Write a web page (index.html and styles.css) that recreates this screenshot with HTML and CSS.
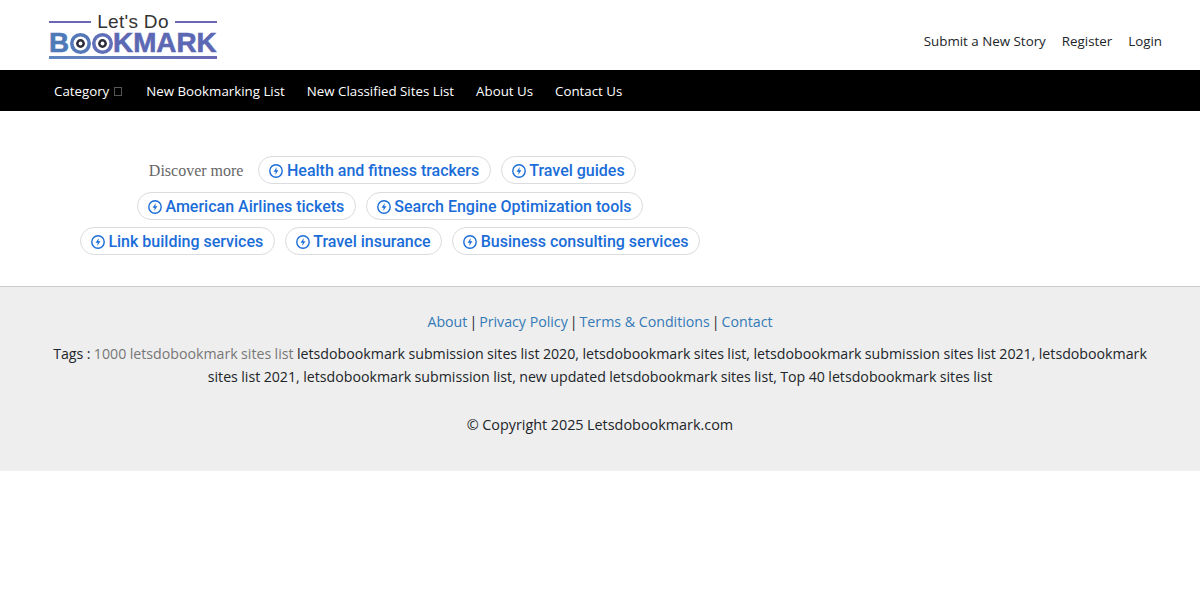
FILE: index.html
```html
<!DOCTYPE html>
<html lang="en">
<head>
<meta charset="utf-8">
<title>Let's Do Bookmark</title>
<link rel="stylesheet" href="styles.css">
</head>
<body>
<header class="top">
  <a class="logo" href="#">
    <span class="logo-line1"><i class="rule"></i><span class="lets">Let's Do</span><i class="rule"></i></span>
    <span class="logo-line2"><span class="logo-b">B</span><svg class="eye" viewBox="0 0 20 20"><circle cx="10" cy="10" r="10" fill="#5578b8"/><circle cx="10" cy="10" r="6.6" fill="#fff"/><circle cx="10" cy="10" r="4.2" fill="#2b2b3a"/><circle cx="10" cy="10" r="1.8" fill="#fff"/></svg><svg class="eye" viewBox="0 0 20 20"><circle cx="10" cy="10" r="10" fill="#6070b8"/><circle cx="10" cy="10" r="6.6" fill="#fff"/><circle cx="10" cy="10" r="4.2" fill="#2b2b3a"/><circle cx="10" cy="10" r="1.8" fill="#fff"/></svg><span class="logo-rest">KMARK</span></span>
    <i class="rule rule-bottom"></i>
  </a>
  <nav class="top-links">
    <a href="#">Submit a New Story</a>
    <a href="#">Register</a>
    <a href="#">Login</a>
  </nav>
</header>
<nav class="menu">
  <a href="#">Category<span class="caret"></span></a>
  <a href="#">New Bookmarking List</a>
  <a href="#">New Classified Sites List</a>
  <a href="#">About Us</a>
  <a href="#">Contact Us</a>
</nav>
<main class="content">
  <div class="chips">
    <div class="chip-row">
      <span class="discover">Discover more</span>
      <a class="chip" href="#"><svg class="bolt" viewBox="1 1 14 14"><circle cx="8" cy="8" r="6.2"/><path d="M8.8 4 5.6 8.8h2.1L7.2 12l3.2-4.8H8.3z"/></svg>Health and fitness trackers</a>
      <a class="chip" href="#"><svg class="bolt" viewBox="1 1 14 14"><circle cx="8" cy="8" r="6.2"/><path d="M8.8 4 5.6 8.8h2.1L7.2 12l3.2-4.8H8.3z"/></svg>Travel guides</a>
    </div>
    <div class="chip-row">
      <a class="chip" href="#"><svg class="bolt" viewBox="1 1 14 14"><circle cx="8" cy="8" r="6.2"/><path d="M8.8 4 5.6 8.8h2.1L7.2 12l3.2-4.8H8.3z"/></svg>American Airlines tickets</a>
      <a class="chip" href="#"><svg class="bolt" viewBox="1 1 14 14"><circle cx="8" cy="8" r="6.2"/><path d="M8.8 4 5.6 8.8h2.1L7.2 12l3.2-4.8H8.3z"/></svg>Search Engine Optimization tools</a>
    </div>
    <div class="chip-row">
      <a class="chip" href="#"><svg class="bolt" viewBox="1 1 14 14"><circle cx="8" cy="8" r="6.2"/><path d="M8.8 4 5.6 8.8h2.1L7.2 12l3.2-4.8H8.3z"/></svg>Link building services</a>
      <a class="chip" href="#"><svg class="bolt" viewBox="1 1 14 14"><circle cx="8" cy="8" r="6.2"/><path d="M8.8 4 5.6 8.8h2.1L7.2 12l3.2-4.8H8.3z"/></svg>Travel insurance</a>
      <a class="chip" href="#"><svg class="bolt" viewBox="1 1 14 14"><circle cx="8" cy="8" r="6.2"/><path d="M8.8 4 5.6 8.8h2.1L7.2 12l3.2-4.8H8.3z"/></svg>Business consulting services</a>
    </div>
  </div>
</main>
<footer class="foot">
  <p class="foot-links"><a href="#">About</a> | <a href="#">Privacy Policy</a> | <a href="#">Terms &amp; Conditions</a> | <a href="#">Contact</a></p>
  <p class="tags">Tags : <span class="muted">1000 letsdobookmark sites list</span> letsdobookmark submission sites list 2020, letsdobookmark sites list, letsdobookmark submission sites list 2021, letsdobookmark sites list 2021, letsdobookmark submission list, new updated letsdobookmark sites list, Top 40 letsdobookmark sites list</p>
  <p class="copy">© Copyright 2025 Letsdobookmark.com</p>
</footer>
</body>
</html>
```
FILE: styles.css
```css
* { box-sizing: border-box; }
html, body { margin: 0; padding: 0; background: #fff; }
body { font-family: "Open Sans", "Noto Sans", sans-serif; font-size: 14px; color: #212529; }
a { text-decoration: none; color: inherit; }

.top { height: 70px; display: flex; justify-content: space-between; padding: 0 38px 0 49px; }
.logo { width: 168px; display: flex; flex-direction: column; padding-top: 13px; }
.logo-line1 { display: flex; align-items: center; gap: 6px; height: 18px; }
.rule { display: block; flex: 1; height: 2px; background: #6a68b4; }
.lets { font-family: "Liberation Sans", sans-serif; font-size: 19px; letter-spacing: .3px; color: #333; line-height: 18px; }
.logo-line2 { display: flex; align-items: center; height: 24px; font-family: "Liberation Sans", sans-serif; font-weight: 700; font-size: 27.8px; line-height: 24px; -webkit-text-stroke: .6px currentColor; white-space: nowrap; }
.logo-b { color: #4f7ab8; }
.logo-rest { color: #5c68b4; }
.eye { width: 21px; height: 21px; margin: 0 .5px; flex: none; }
.rule-bottom { flex: none; height: 3px; margin-top: 1px; background: linear-gradient(90deg, #5f86c0, #6a68b4); }

.top-links { display: flex; gap: 16px; padding-top: 31px; font-size: 13.35px; line-height: 20px; color: #212529; }

.menu { height: 41px; background: #000; display: flex; align-items: center; gap: 22px; padding-left: 54px; color: #fff; font-size: 13.3px; }
.caret { display: inline-block; width: 8px; height: 9px; margin-left: 5px; margin-right: 2px; border: 1px solid #555; }

.content { height: 175px; padding-top: 45px; }
.chips { width: 780px; display: flex; flex-direction: column; gap: 7px; }
.chip-row { display: flex; justify-content: center; align-items: center; gap: 10px; }
.chip-row:first-child { margin-bottom: 1px; }
.discover { font-family: "Liberation Serif", serif; font-size: 16px; color: #666; margin-right: 5px; padding: 2px 0 0 5px; }
.chip { display: flex; align-items: center; height: 28px; padding: 0 10.5px 0 10px; border: 1px solid #dadce0; border-radius: 14px; font-family: Roboto, sans-serif; font-weight: 500; font-size: 16px; color: #1a6dd8; white-space: nowrap; }
.bolt { width: 14px; height: 14px; margin: 1px 3.5px 0 0; flex: none; }
.bolt circle { fill: none; stroke: #1a6dd8; stroke-width: 1.4; }
.bolt path { fill: #1a6dd8; }

.foot { height: 185px; background: #eee; border-top: 1px solid #ccc; text-align: center; padding: 22.5px 40px 0; font-size: 14.2px; line-height: 23px; color: #212529; word-spacing: -.3px; }
.foot p { margin: 0; }
.foot-links { margin-bottom: 9px !important; word-spacing: -1.7px; }
.foot-links a { color: #337ab7; word-spacing: 0; }
.muted { color: #777; }
.copy { margin-top: 25.5px !important; font-size: 14.4px; }
```
